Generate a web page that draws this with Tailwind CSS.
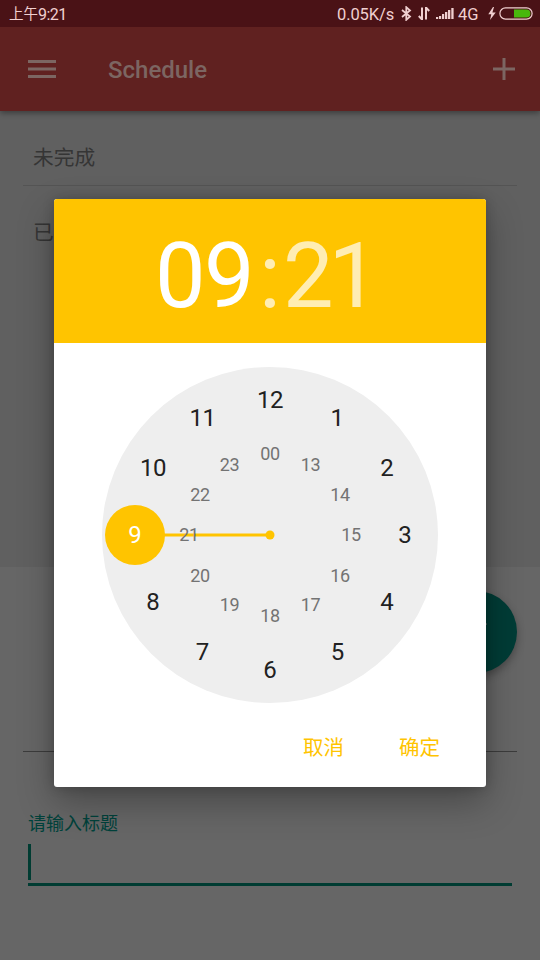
<!DOCTYPE html>
<html lang="zh-CN">
<head>
<meta charset="utf-8">
<title>Schedule</title>
<script src="https://cdn.jsdelivr.net/npm/@tailwindcss/browser@4"></script>
</head>
<body class="relative h-[960px] w-[540px] overflow-hidden bg-[#666666] font-[Roboto,'Noto_Sans_CJK_SC',sans-serif]">
  <div class="flex h-full flex-col">
    <header class="z-10 shadow-[0_2px_6px_rgba(0,0,0,0.4)]">
      <div class="flex h-[27px] items-center justify-between bg-[#4a1216] pr-[7px] pl-[9px] text-[#f0cfd0]">
        <span class="flex items-center leading-none whitespace-nowrap"><span class="mt-[3px] text-[14.5px]">上午</span><span class="mt-[2px] text-[16px] tracking-[-0.5px]">9:21</span></span>
        <div class="flex items-center">
          <span class="mt-[3px] w-[57px] text-[16.5px] leading-none tracking-[-0.1px]">0.05K/s</span>
          <svg class="ml-[7px] h-[15px] w-[11px]" viewBox="0 0 11 15" fill="none" stroke="currentColor" stroke-width="1.8"><path d="M1 4 9 10.5 5.3 13.8V1.2L9 4.5 1 11"/></svg>
          <svg class="ml-[6px] h-[13px] w-[12px]" viewBox="0 0 12 13" fill="none" stroke="currentColor" stroke-width="2"><path d="M4 .5v12L.8 9M8 12.5V.5L11.2 4"/></svg>
          <svg class="ml-[6px] h-[13px] w-[18px]" viewBox="0 0 18 13" fill="currentColor"><path d="M0 10h2.2v2H0zM3 9h2.2v3H3zM6 7h2.2v5H6zM9 5h2.3v7H9zM12 3h2.3v9H12zM15.3 1h2.3v11h-2.3z"/></svg>
          <span class="mt-[3px] ml-[4px] w-[23px] text-[16.5px] leading-none">4G</span>
          <svg class="ml-[7px] h-[13px] w-[8px]" viewBox="0 0 8 13" fill="currentColor"><path d="M5 0 .3 7.2h3L2 13l5.7-7.5H4.4L6 0z"/></svg>
          <svg class="ml-[3px] h-[13px] w-[34px]" viewBox="0 0 34 13"><rect x=".9" y=".9" width="32.2" height="11.2" rx="5.6" fill="none" stroke="#f0cfd0" stroke-width="1.2"/><path d="M15 2.6h12.5a3.9 3.9 0 0 1 0 7.8H15z" fill="#48b80d"/></svg>
        </div>
      </div>
      <div class="flex h-[84px] items-center bg-[#602120] pr-[25px] pl-[28px] text-[#7c6662]">
        <svg class="h-[20px] w-[28px]" viewBox="0 0 28 20" fill="currentColor"><path d="M0 1h28v3H0zM0 8.5h28v3H0zM0 16h28v3H0z"/></svg>
        <span class="mt-[2px] ml-[52px] text-[24px] font-medium">Schedule</span>
        <svg class="ml-auto h-[22px] w-[22px]" viewBox="0 0 22 22" fill="none" stroke="currentColor" stroke-width="3"><path d="M0 11h22M11 0v22"/></svg>
      </div>
    </header>

    <main class="h-[456px] bg-[#606060] px-[23px] text-[20.7px] text-[#353535]">
      <div class="flex h-[75px] items-center border-b border-[#545454] pt-[22px] pl-[10px]">未完成</div>
      <div class="flex h-[75px] items-center pt-[20px] pl-[10px]">已完成</div>
    </main>

    <section class="relative flex flex-1 flex-col px-[23px]">
      <div class="h-[185px] border-b-[1.5px] border-[#3c3c3c]"></div>
      <label class="mt-[58px] ml-[5px] text-[18px] leading-[28px] text-[#00423b]">请输入标题</label>
      <div class="mt-[6px] mr-[5px] ml-[5px] h-[42px] border-b-[3px] border-[#003c32]"><div class="h-[36px] w-[3px] bg-[#003c32]"></div></div>
      <div class="absolute top-[24px] right-[23px] flex h-[82px] w-[82px] items-center justify-center rounded-full bg-[#003c36] text-[#666666] shadow-[0_4px_8px_rgba(0,0,0,0.3)]">
        <svg class="h-[24px] w-[24px]" viewBox="0 0 24 24" fill="none" stroke="currentColor" stroke-width="3"><path d="m1 13 6 7L22 3"/></svg>
      </div>
    </section>
  </div>

  <div role="dialog" class="absolute top-[199px] left-[54px] z-20 flex h-[588px] w-[432px] flex-col overflow-hidden rounded-[3px] bg-white shadow-[0_15px_36px_rgba(0,0,0,0.3),0_0_12px_rgba(0,0,0,0.2)]">
    <div class="flex h-[144px] items-center justify-center bg-[#ffc400] pt-[12px] text-[90px] leading-none text-white">
      <span class="w-[102px] tracking-[-1.5px]">09</span><span class="w-[26px] text-center text-white/70">:</span><span class="w-[102px] tracking-[-5px] text-white/70">21</span>
    </div>
    <svg class="mx-auto mt-[24px] h-[336px] w-[336px] shrink-0" viewBox="-168 -168 336 336" text-anchor="middle">
      <circle r="168" fill="#eeeeee"/>
      <path d="M-135 0H0" stroke="#ffc400" stroke-width="3"/>
      <circle cx="-135" r="30" fill="#ffc400"/>
      <circle r="4.5" fill="#ffc400"/>
      <g class="text-[24px] tracking-[-0.5px]" fill="#212121">
        <text x="0" y="-127">12</text><text x="67" y="-109">1</text><text x="116.7" y="-59.5">2</text><text x="134.7" y="8">3</text><text x="116.7" y="75.3">4</text><text x="67.3" y="125">5</text><text x="-.3" y="143">6</text><text x="-67.7" y="125">7</text><text x="-117.3" y="75.3">8</text><text x="-135.3" y="8" fill="#ffffff">9</text><text x="-117" y="-59.5">10</text><text x="-67.5" y="-109">11</text>
      </g>
      <g class="text-[18px] tracking-[-0.3px]" fill="#737373">
        <text x="0" y="-75">00</text><text x="40.5" y="-64">13</text><text x="70" y="-34.5">14</text><text x="81" y="6">15</text><text x="70" y="46.5">16</text><text x="40.5" y="76">17</text><text x="0" y="87">18</text><text x="-40.5" y="76">19</text><text x="-70" y="46.5">20</text><text x="-81" y="6">21</text><text x="-70" y="-34.5">22</text><text x="-40.5" y="-64">23</text>
      </g>
    </svg>
    <div class="flex flex-1 items-center justify-end gap-[55px] pt-[6px] pr-[46px] text-[20.5px] text-[#ffc400]">
      <button>取消</button><button>确定</button>
    </div>
  </div>
</body>
</html>
